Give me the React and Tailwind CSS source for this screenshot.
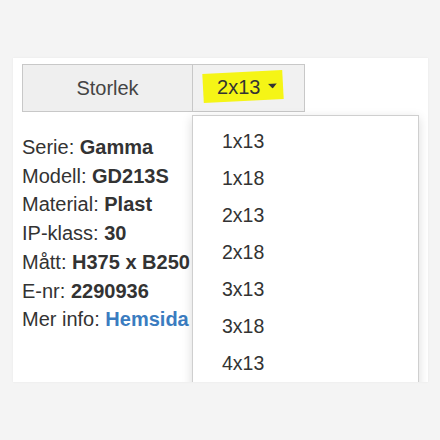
import React from 'react';

const sizes = ['1x13', '1x18', '2x13', '2x18', '3x13', '3x18', '4x13'];

const specs = [
    ['Serie:', 'Gamma'],
    ['Modell:', 'GD213S'],
    ['Material:', 'Plast'],
    ['IP-klass:', '30'],
    ['Mått:', 'H375 x B250'],
    ['E-nr:', '2290936'],
];

export default function App() {
    return (
        <div className="h-[440px] w-[440px] bg-[#f4f4f4] pt-[58px] pl-[13px] font-['Liberation_Sans',Arial,sans-serif] text-[#333]">
            <div className="relative h-[324px] w-[415px] overflow-hidden bg-white pt-[6px] pl-[9px] shadow-[0_0_2px_rgba(0,0,0,0.06)]">
                <div className="flex h-[48px] w-[283px] border border-[#c8c8c8]">
                    <div className="flex w-[169px] items-center justify-center bg-[#efefef] text-[20px] text-[#444]">
                        Storlek
                    </div>
                    <div className="flex flex-1 items-center border-l border-[#c8c8c8] bg-[#f1f1f1] pl-[10px]">
                        <div className="flex h-[29px] -translate-y-[2px] items-center bg-[#f5f516] pl-[14px] pr-[6px] -rotate-3 text-[20px] text-[#333]">
                            <span className="rotate-3">2x13</span>
                            <svg width="9" height="5" viewBox="0 0 9 5" className="ml-[8px] mt-[2px]">
                                <path d="M0 0 L9 0 L4.5 5 Z" fill="#333" />
                            </svg>
                        </div>
                    </div>
                </div>

                <div className="mt-[21px] text-[20px] leading-[28.7px]">
                    {specs.map(([label, value]) => (
                        <div key={label}>
                            {label} <b className="font-bold">{value}</b>
                        </div>
                    ))}
                    <div>
                        Mer info: <a className="font-bold text-[#3a7cc0]">Hemsida</a>
                    </div>
                </div>

                <div className="absolute left-[179px] top-[57px] h-[280px] w-[227px] border border-[#cfcfcf] bg-white pt-[7px] shadow-[0_3px_10px_rgba(0,0,0,0.15)]">
                    {sizes.map((s) => (
                        <div key={s} className="h-[37px] pl-[29px] text-[19.5px] leading-[37px] text-[#333]">
                            {s}
                        </div>
                    ))}
                </div>
            </div>
        </div>
    );
}
